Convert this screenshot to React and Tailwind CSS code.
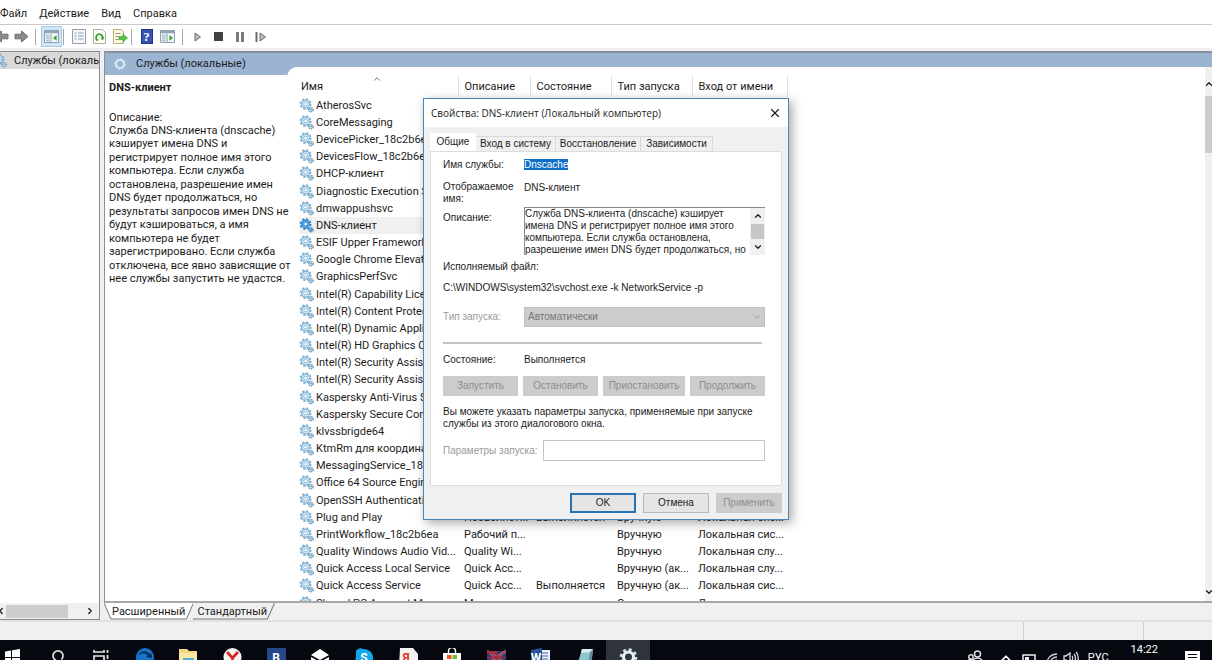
import { useState } from "react";
import { ChevronDown, ChevronLeft, ChevronRight, ChevronUp, X } from "lucide-react";

const MENU = ["Файл", "Действие", "Вид", "Справка"];

const SUMMARY = [
  "Служба DNS-клиента (dnscache)",
  "кэширует имена DNS и",
  "регистрирует полное имя этого",
  "компьютера. Если служба",
  "остановлена, разрешение имен",
  "DNS будет продолжаться, но",
  "результаты запросов имен DNS не",
  "будут кэшироваться, а имя",
  "компьютера не будет",
  "зарегистрировано. Если служба",
  "отключена, все явно зависящие от",
  "нее службы запустить не удастся.",
];

const SERVICES = [
  ["AtherosSvc"],
  ["CoreMessaging"],
  ["DevicePicker_18c2b6ea"],
  ["DevicesFlow_18c2b6ea"],
  ["DHCP-клиент"],
  ["Diagnostic Execution S"],
  ["dmwappushsvc"],
  ["DNS-клиент"],
  ["ESIF Upper Framework"],
  ["Google Chrome Elevat"],
  ["GraphicsPerfSvc"],
  ["Intel(R) Capability Lice"],
  ["Intel(R) Content Protec"],
  ["Intel(R) Dynamic Appli"],
  ["Intel(R) HD Graphics C"],
  ["Intel(R) Security Assist"],
  ["Intel(R) Security Assist"],
  ["Kaspersky Anti-Virus S"],
  ["Kaspersky Secure Conn"],
  ["klvssbrigde64"],
  ["KtmRm для координа"],
  ["MessagingService_18c2"],
  ["Office 64 Source Engin"],
  ["OpenSSH Authenticati"],
  ["Plug and Play", "Позволяет...", "Выполняется", "Вручную", "Локальная сис..."],
  ["PrintWorkflow_18c2b6ea", "Рабочий п...", "", "Вручную", "Локальная сис..."],
  ["Quality Windows Audio Vid...", "Quality Wi...", "", "Вручную", "Локальная слу..."],
  ["Quick Access Local Service", "Quick Acc...", "", "Вручную (ак...", "Локальная слу..."],
  ["Quick Access Service", "Quick Acc...", "Выполняется", "Вручную (ак...", "Локальная сис..."],
  ["Shared PC Account Mana...", "Manages ...", "", "Отключена", "Локальная сис..."],
];

function Gear({ active }) {
  const main = active ? "#2f86cf" : "#7fb2d3";
  const fill = active ? "#5aa9e6" : "#d3e8f5";
  return (
    <svg viewBox="0 0 16 16" className="h-[15px] w-[15px] shrink-0">
      <circle cx="7" cy="6.5" r="5.4" fill="none" stroke={main} strokeWidth="1.9" strokeDasharray="2.2 2.04" />
      <circle cx="7" cy="6.5" r="4.3" fill={fill} stroke={main} strokeWidth="1.2" />
      <circle cx="7" cy="6.5" r="1.9" fill="#fff" stroke={main} strokeWidth="0.9" />
      <circle cx="12.8" cy="12.6" r="2.3" fill={fill} stroke="#5d8cad" strokeWidth="1.3" strokeDasharray="1.3 0.7" />
      <circle cx="12.8" cy="12.6" r="0.8" fill="#5d8cad" />
    </svg>
  );
}

function Arrow({ flip }) {
  return (
    <svg viewBox="0 0 16 14" className={flip ? "h-[13px] w-[15px] -scale-x-100" : "h-[13px] w-[15px]"}>
      <path d="M1 4.5h7V1l7 6-7 6V9.5H1z" fill="#8a8a8a" stroke="#6c6c6c" />
    </svg>
  );
}

function PaneIcon({ play }) {
  return (
    <svg viewBox="0 0 16 14" className="h-[13px] w-[15px]">
      <path d="M.5.5h15v13H.5z" fill="#f6f8fa" stroke="#8296a8" />
      <path d="M1 1h14v2.5H1z" fill="#8fa6ba" />
      <path d="M2 5.5h4M2 7.5h4M2 9.5h4M2 11.5h4" stroke="#8fa6ba" />
      <path d="M7.5 4v9" stroke="#8296a8" />
      {play ? <path d="M10 5.5l4 3-4 3z" fill="#3aa33a" /> : <path d="M13.5 5.5l-4 3 4 3z" fill="#3aa33a" />}
    </svg>
  );
}

function ListIcon() {
  return (
    <svg viewBox="0 0 14 15" className="h-[15px] w-[14px]">
      <path d="M.5.5h13v14H.5z" fill="#f2f6fa" stroke="#8f9fae" />
      <path d="M2.5 4h2M6 4h5.5M2.5 7h2M6 7h5.5M2.5 10h2M6 10h5.5" stroke="#8ba3bb" />
    </svg>
  );
}

function RefreshIcon() {
  return (
    <svg viewBox="0 0 13 15" className="h-[15px] w-[13px]">
      <path d="M.5.5h9l3 3v11H.5z" fill="#fdfdf5" stroke="#a9aea0" />
      <path d="M5 11.5A3.3 3.3 0 1 1 9.6 9" fill="none" stroke="#35a335" strokeWidth="1.7" />
      <path d="M7.5 8.5h4l-2 3z" fill="#35a335" />
    </svg>
  );
}

function ExportIcon() {
  return (
    <svg viewBox="0 0 15 15" className="h-[15px] w-[15px]">
      <path d="M.5.5h8l2 2v12H.5z" fill="#fdf9df" stroke="#b5ae82" />
      <path d="M2.5 4.5h5M2.5 7.5h3M2.5 10.5h3" stroke="#9b9a86" />
      <path d="M6 7.5h4V5l4.5 4-4.5 4v-2.5H6z" fill="#55c444" stroke="#2f9a2c" strokeWidth=".6" />
    </svg>
  );
}

function Separator() {
  return <span className="h-4 w-px bg-[#a5a5a5]" />;
}

function ToolButton({ label, active, children }) {
  return (
    <button
      aria-label={label}
      className={
        active
          ? "flex h-[21px] w-[21px] items-center justify-center border border-[#a5cdea] bg-[#cfe6f7]"
          : "flex h-[21px] w-[21px] items-center justify-center"
      }
    >
      {children}
    </button>
  );
}

function Toolbar() {
  return (
    <div className="flex h-6 shrink-0 items-center border-t border-[#c9c9c9] bg-white">
      <div className="-ml-2 flex w-[43px] items-center justify-between pr-1">
        <ToolButton label="Назад"><Arrow flip /></ToolButton>
        <ToolButton label="Вперед"><Arrow /></ToolButton>
      </div>
      <Separator />
      <div className="flex pr-px pl-[5px]">
        <ToolButton label="Дерево консоли" active><PaneIcon /></ToolButton>
      </div>
      <Separator />
      <div className="flex pl-1">
        <ToolButton label="Свойства"><ListIcon /></ToolButton>
        <ToolButton label="Обновить"><RefreshIcon /></ToolButton>
        <ToolButton label="Экспорт"><ExportIcon /></ToolButton>
      </div>
      <Separator />
      <div className="flex px-1">
        <ToolButton label="Справка">
          <span className="flex h-[15px] w-3 items-center justify-center border border-[#20357c] bg-[#3553b4] font-['Liberation_Serif',serif] text-[13px] font-bold leading-none text-white">
            ?
          </span>
        </ToolButton>
        <ToolButton label="Панель действий"><PaneIcon play /></ToolButton>
      </div>
      <Separator />
      <div className="flex pl-1">
        <ToolButton label="Запустить">
          <svg viewBox="0 0 8 10" className="h-[10px] w-2">
            <path d="M1 1l5.5 4L1 9z" fill="#bbb" stroke="#6d6d6d" />
          </svg>
        </ToolButton>
        <ToolButton label="Остановить"><span className="h-[9px] w-[9px] bg-[#414141]" /></ToolButton>
        <ToolButton label="Приостановить">
          <span className="h-[10px] w-2 border-x-3 border-[#7b7b7b]" />
        </ToolButton>
        <ToolButton label="Перезапустить">
          <svg viewBox="0 0 12 10" className="h-[10px] w-3">
            <path d="M1.5 0v10" stroke="#6d6d6d" strokeWidth="2" />
            <path d="M5 1l5.5 4L5 9z" fill="#bbb" stroke="#6d6d6d" />
          </svg>
        </ToolButton>
      </div>
    </div>
  );
}

function Tree() {
  return (
    <aside className="flex w-[100px] shrink-0 flex-col border-t border-r border-b border-[#8c8c8c] bg-white">
      <div className="-ml-2 flex h-[17px] items-center gap-1 overflow-hidden bg-[#d9d9d9] whitespace-nowrap">
        <Gear />
        <span className="pl-[3px]">Службы (локальные)</span>
      </div>
      <div className="mt-auto flex h-4 items-center justify-between bg-[#f0f0f0] pr-1">
        <ChevronLeft className="-ml-1 h-[10px] w-[10px]" strokeWidth={3} />
        <span className="mr-auto h-[13px] w-[62px] bg-[#cdcdcd]" />
        <ChevronRight className="h-[10px] w-[10px]" strokeWidth={3} />
      </div>
    </aside>
  );
}

function ServiceTable() {
  return (
    <table className="w-[488px] table-fixed border-collapse text-left">
      <colgroup>
        <col className="w-[159px]" />
        <col className="w-[72px]" />
        <col className="w-[81px]" />
        <col className="w-[81px]" />
        <col className="w-[95px]" />
      </colgroup>
      <thead>
        <tr className="h-[21px]">
          <th className="border-r border-[#e0e0e0] pl-[2px] font-normal">
            <span className="relative block">
              Имя
              <ChevronUp className="absolute -top-[5px] left-[71px] h-[10px] w-[10px] text-[#555]" strokeWidth={2} />
            </span>
          </th>
          {["Описание", "Состояние", "Тип запуска", "Вход от имени"].map((title) => (
            <th key={title} className="border-r border-[#e0e0e0] pl-[6px] font-normal whitespace-nowrap">
              {title}
            </th>
          ))}
        </tr>
      </thead>
      <tbody>
        {SERVICES.map(([name, ...rest], i) => (
          <tr key={i} className="h-[17px] leading-[17px] nth-[6n]:h-[18px]">
            <td className="p-0">
              <div className={name === "DNS-клиент" ? "flex items-center gap-[2px] bg-[#f0f0f0]" : "flex items-center gap-[2px]"}>
                <Gear active={name === "DNS-клиент"} />
                <span className="whitespace-nowrap">{name}</span>
              </div>
            </td>
            {rest.map((cell, j) => (
              <td key={j} className="p-0 pl-[6px] whitespace-nowrap">{cell}</td>
            ))}
          </tr>
        ))}
      </tbody>
    </table>
  );
}

function SheetTabs() {
  return (
    <div className="flex h-[17px] shrink-0 bg-[#f0f0f0]">
      <button className="relative flex items-center pr-2 pl-2">
        <svg viewBox="0 0 90 17" preserveAspectRatio="none" className="absolute inset-0 h-full w-full">
          <path d="M0 0l7 16h76l6-16z" fill="#fff" />
          <path d="M0 0l7 16h76l7-16" fill="none" stroke="#777" />
        </svg>
        <span className="relative">Расширенный</span>
      </button>
      <button className="relative flex items-center pr-2 pl-1">
        <svg viewBox="0 0 80 17" preserveAspectRatio="none" className="absolute inset-0 h-full w-full">
          <path d="M-4 5l4 11h73l7-16" fill="none" stroke="#777" />
        </svg>
        <span className="relative">Стандартный</span>
      </button>
    </div>
  );
}

function Details() {
  return (
    <main className="flex min-w-0 flex-1 flex-col">
      <div className="flex min-h-0 flex-1 flex-col border-t-2 border-b-2 border-l border-[#8a8f98] border-b-[#a8a8a8] bg-[#9ab4d2]">
        <div className="flex min-h-0 flex-1">
          <section className="z-10 flex w-[182px] shrink-0 flex-col bg-white">
            <h1 className="flex h-[22px] shrink-0 items-center gap-[9px] bg-[#9ab4d2] pl-2">
              <svg viewBox="0 0 14 14" className="h-[14px] w-[14px]">
                <circle cx="7" cy="7" r="4" fill="none" stroke="#dceaf6" strokeWidth="2" />
                <circle cx="7" cy="7" r="5.5" fill="none" stroke="#c6dcef" strokeDasharray="2 2.3" />
              </svg>
              Службы (локальные)
            </h1>
            <h2 className="pt-[5px] pl-1 leading-4 font-bold">DNS-клиент</h2>
            <div className="pt-[15px] pl-1 whitespace-nowrap">
              <p className="h-[13px] leading-[13px]">Описание:</p>
              {SUMMARY.map((line) => (
                <p key={line} className="h-[14px] leading-[14px] even:h-[13px]">{line}</p>
              ))}
            </div>
          </section>
          <div className="mt-[14px] flex min-w-0 flex-1 justify-between overflow-hidden rounded-tl-[10px] bg-white">
            <div className="pt-[9px] pl-3">
              <ServiceTable />
            </div>
            <div className="flex w-[7px] shrink-0 flex-col items-center overflow-hidden bg-[#f0f0f0] pt-3">
              <ChevronUp className="h-[10px] w-[10px] shrink-0" strokeWidth={3} />
              <span className="mt-[7px] h-[57px] w-full bg-[#cdcdcd]" />
              <ChevronDown className="mt-auto mb-1 h-[10px] w-[10px] shrink-0" strokeWidth={3} />
            </div>
          </div>
        </div>
      </div>
      <SheetTabs />
    </main>
  );
}

const grayButton = "h-[20px] bg-[#cccccc] text-[#8c8c8c]";

function PropertiesDialog({ onClose }) {
  return (
    <div
      role="dialog"
      aria-label="Свойства: DNS-клиент"
      className="absolute top-[98px] left-[423px] z-20 w-[366px] border border-[#4a86b8] bg-[#f0f0f0] font-['Liberation_Sans',sans-serif] text-[10px] leading-3 shadow-[3px_3px_10px_rgba(0,0,0,0.35)]"
    >
      <div className="flex h-7 items-center justify-between bg-white pr-[6px] pl-[7px] font-['Open_Sans','Noto_Sans',sans-serif]">
        <span>Свойства: DNS-клиент (Локальный компьютер)</span>
        <button aria-label="Закрыть" onClick={onClose}>
          <X className="h-[14px] w-[14px]" strokeWidth={2} />
        </button>
      </div>

      <div className="px-[6px] pt-[6px]">
        <div className="flex items-end">
          <button className="h-[18px] w-[46px] bg-white">Общие</button>
          <button className="h-[15px] w-20 border-t border-r border-[#d9d9d9]">Вход в систему</button>
          <button className="h-[15px] w-[85px] border-t border-r border-[#d9d9d9]">Восстановление</button>
          <button className="h-[15px] w-[72px] border-t border-r border-[#d9d9d9]">Зависимости</button>
        </div>

        <div className="border border-[#dcdcdc] bg-white pt-[7px] pr-4 pb-6 pl-3">
          <div className="grid grid-cols-[80px_1fr] gap-x-px">
            <span>Имя службы:</span>
            <span>
              <span className="bg-[#0f6fc6] text-white">Dnscache</span>
            </span>
            <span className="mt-[10px]">Отображаемое имя:</span>
            <span className="mt-[11px]">DNS-клиент</span>
            <label htmlFor="about" className="mt-[7px]">Описание:</label>
            <div className="mt-[2px] flex h-[48px] border-t border-l border-[#8a8a8a]">
              <textarea
                id="about"
                readOnly
                className="min-w-0 flex-1 resize-none overflow-hidden bg-white whitespace-pre outline-none"
                value={
                  "Служба DNS-клиента (dnscache) кэширует\nимена DNS и регистрирует полное имя этого\nкомпьютера. Если служба остановлена,\nразрешение имен DNS будет продолжаться, но"
                }
              />
              <div className="flex w-[15px] flex-col items-center justify-between bg-[#f0f0f0] py-[3px]">
                <ChevronUp className="h-[10px] w-[10px]" strokeWidth={3} />
                <span className="mr-px h-[15px] w-[13px] bg-[#c6c6c6]" />
                <ChevronDown className="h-[10px] w-[10px]" strokeWidth={3} />
              </div>
            </div>
          </div>

          <p className="mt-[6px]">Исполняемый файл:</p>
          <p className="mt-[9px]">C:\WINDOWS\system32\svchost.exe -k NetworkService -p</p>

          <div className="mt-[13px] grid grid-cols-[80px_1fr] items-center gap-x-px">
            <label htmlFor="startup" className="text-[#9a9a9a]">Тип запуска:</label>
            <div className="relative">
              <select
                id="startup"
                disabled
                className="block h-5 w-full appearance-none border border-[#bfbfbf] bg-[#cccccc] px-[3px] text-[#777] opacity-100"
              >
                <option>Автоматически</option>
              </select>
              <ChevronDown className="absolute top-[5px] right-[3px] h-[10px] w-[10px] text-[#999]" />
            </div>
          </div>

          <hr className="mt-[15px] mr-[3px] border-t-2 border-[#c4c4c4]" />

          <div className="mt-[10px] grid grid-cols-[80px_1fr] gap-x-px">
            <span>Состояние:</span>
            <span>Выполняется</span>
          </div>

          <div className="mt-[10px] flex justify-between">
            <button disabled className={`${grayButton} w-[75px]`}>Запустить</button>
            <button disabled className={`${grayButton} w-[75px]`}>Остановить</button>
            <button disabled className={`${grayButton} w-[82px]`}>Приостановить</button>
            <button disabled className={`${grayButton} w-[75px]`}>Продолжить</button>
          </div>

          <p className="mt-[10px] whitespace-nowrap">
            Вы можете указать параметры запуска, применяемые при запуске
            <br />
            службы из этого диалогового окна.
          </p>

          <div className="mt-[10px] flex items-center">
            <label htmlFor="params" className="w-[100px] text-[#9a9a9a] whitespace-nowrap">Параметры запуска:</label>
            <input id="params" disabled className="h-[21px] min-w-0 flex-1 border border-[#c4c4c4] bg-white px-1" />
          </div>
        </div>
      </div>

      <div className="flex justify-end gap-[7px] pt-[7px] pr-[6px] pb-[6px]">
        <button onClick={onClose} className="h-5 w-[66px] border-2 border-[#2a73b3] bg-[#e5e5e5]">OK</button>
        <button onClick={onClose} className="h-5 w-[66px] border border-[#b9b9b9] bg-[#e5e5e5]">Отмена</button>
        <button disabled className={`${grayButton} w-[66px]`}>Применить</button>
      </div>
    </div>
  );
}

const TASKS = [
  [
    "Пуск",
    <path d="M2 3.5l6-1v6.5H2zM9 2.3l8-1.3v8H9zM2 10h6v6.5l-6-1zM9 10h8v8l-8-1.3z" fill="#fff" />,
  ],
  ["Поиск", <path d="M7.6 11.5a5 5 0 1 1 6.8 0M8.5 11L6 16" fill="none" stroke="#ddd" strokeWidth="1.7" />],
  [
    "Представление задач",
    <path d="M3 2v2h10V2M3 16V8h10v8M16.5 2v3M16.5 7v4M16.5 13v3" fill="none" stroke="#e8e8e8" strokeWidth="1.7" />,
  ],
  [
    "Edge",
    <>
      <circle cx="10" cy="9" r="9" fill="#1673c9" />
      <path d="M3 8c3-6 9-6 12-1l1-3 1 6-6-1 2-1c-3-4-7-3-10 0z" fill="#06284f" />
    </>,
  ],
  [
    "Проводник",
    <>
      <path d="M0 1h8l2 2h8v15H0z" fill="#f4d67c" />
      <path d="M0 5h18v13H0z" fill="#fbe9a5" />
      <path d="M4 10h11v8H4z" fill="#57aeca" />
    </>,
  ],
  [
    "Yandex",
    <>
      <circle cx="9.5" cy="9" r="9" fill="#f4f4f4" />
      <path d="M4 4l5.5 6L15 4M9.5 9v8" fill="none" stroke="#d9241f" strokeWidth="2.6" />
    </>,
  ],
  ["ВКонтакте", <rect width="19" height="19" rx="1" fill="#24488a" />, "B", "text-white"],
  [
    "Почта",
    <>
      <path d="M0 7l9-6 9 6-9 5z" fill="#fff" />
      <path d="M0 9l9 5 9-5v9H0z" fill="#fff" />
    </>,
  ],
  ["Skype", <path d="M1 3a5 5 0 0 1 7-2 9 9 0 0 1 10 10v7H3a9 9 0 0 1-2-9z" fill="#13a6e8" />, "S", "text-white"],
  ["Яндекс", <path d="M1 0h13l5 6v12H0z" fill="#f1f1ef" />, "Я", "pr-1 text-[#dc3a2b]"],
  [
    "Магазин",
    <>
      <path d="M5.5 5V3a3.5 3.5 0 0 1 7 0v2" fill="none" stroke="#fff" strokeWidth="1.4" />
      <path d="M0 5h18v13H0z" fill="#fff" />
      <path d="M4 7h4.5v4H4z" fill="#f05125" />
      <path d="M9.5 7H14v4H9.5z" fill="#7ebb28" />
      <path d="M4 12h4.5v4H4z" fill="#28a3e4" />
      <path d="M9.5 12H14v4H9.5z" fill="#fab922" />
    </>,
  ],
  [
    "Игра",
    <>
      <path d="M0 3h19v13H0z" fill="#30386c" />
      <path d="M0 3l19 13M19 3L0 16" stroke="#b9a9b8" strokeWidth="2.5" />
      <path d="M0 3h9v3H0z" fill="#a62f3b" />
      <path d="M0 9.5h19M9.5 3v13M0 3l19 13M19 3L0 16" stroke="#a8283f" strokeWidth="1.5" />
    </>,
  ],
  [
    "Word",
    <>
      <path d="M8 2h11v15H8z" fill="#eef3fb" />
      <path d="M11 5h6M11 8h6M11 11h6" stroke="#3a62a8" />
      <path d="M0 2l11-2v18H0z" fill="#2b569a" />
    </>,
    "W",
    "pr-2",
  ],
  [
    "Блокнот",
    <>
      <path d="M7 1h11l-2 17H2z" fill="#8fc3cf" />
      <path d="M7 1l11 0-1 3L6 5z" fill="#d9eef0" />
      <path d="M15 4l3-3-2 17h-3z" fill="#5b8d98" />
    </>,
  ],
  [
    "Службы",
    <>
      <circle cx="9.5" cy="9" r="7.5" fill="none" stroke="#cfe1ea" strokeWidth="2.6" strokeDasharray="3 2.89" />
      <circle cx="9.5" cy="9" r="5" fill="none" stroke="#e8f2f7" strokeWidth="3" />
    </>,
  ],
];

function Taskbar() {
  return (
    <footer className="flex h-5 shrink-0 items-start justify-between overflow-hidden bg-[#05090f] text-white">
      <nav className="-ml-[10px] flex">
        {TASKS.map(([label, art, letter, tone]) => (
          <button
            key={label}
            aria-label={label}
            className={label === "Службы" ? "flex h-8 w-11 justify-center bg-[#30353c] pt-2" : "flex h-8 w-11 justify-center pt-2"}
          >
            <span className="relative flex h-[19px] w-[19px] items-center justify-center">
              <svg viewBox="0 0 19 19" className="absolute inset-0">{art}</svg>
              {letter && <b className={`relative text-xs leading-4 ${tone}`}>{letter}</b>}
            </span>
          </button>
        ))}
      </nav>
      <div className="flex items-start pr-3">
        <svg viewBox="0 0 16 16" className="mt-[10px] mr-4 h-4 w-4 fill-none stroke-[#ddd]" strokeWidth="1.5">
          <circle cx="10.5" cy="4" r="3" />
          <circle cx="4" cy="7" r="2.2" />
          <path d="M5 14c0-8 11-8 11 0M0 14c0-4 3-5 5-4" />
        </svg>
        <ChevronUp className="mt-[11px] mr-[9px] h-[14px] w-[14px]" strokeWidth={3} />
        <svg viewBox="0 0 14 14" className="mt-[14px] mr-[10px] h-[14px] w-[14px]">
          <path d="M1 1h12v9H1z" fill="none" stroke="#eee" strokeWidth="1.5" />
          <path d="M3 3h4v6H3z" fill="#eee" />
        </svg>
        <svg viewBox="0 0 12 14" className="mt-[13px] mr-[5px] h-[14px] w-3 fill-none stroke-[#ccc]" strokeWidth="1.3">
          <path d="M1 11C1 5 5 1 11 1M4 11c0-4 3-7 7-7M7 11c0-2 2-4 4-4" />
        </svg>
        <svg viewBox="0 0 16 14" className="mt-[11px] mr-[9px] h-[14px] w-4 fill-none stroke-[#ddd]" strokeWidth="1.3">
          <path d="M1 5h2l4-3v10L3 9H1zM9 5c1 1 1 3 0 4M11 3c2 2 2 6 0 8M13 1c3 3 3 9 0 12" />
        </svg>
        <span className="mt-[11px] mr-[22px] leading-[14px]">РУС</span>
        <time className="mt-[3px] mr-[27px] leading-[14px]">14:22</time>
        <svg viewBox="0 0 15 16" className="mt-[11px] h-4 w-[15px]">
          <path d="M0 0h15v12H9l-3 3v-3H0z" fill="#fff" />
          <path d="M3 3.5h9M3 6.5h9M3 9.5h6" stroke="#05090f" />
        </svg>
      </div>
    </footer>
  );
}

export default function App() {
  const [open, setOpen] = useState(true);

  return (
    <div className="relative flex h-screen flex-col overflow-hidden bg-[#f0f0f0] font-['Roboto','Noto_Sans',sans-serif] text-[11px] leading-4 text-[#1c1c1c]">
      <nav className="flex h-6 shrink-0 items-center gap-3 bg-white pt-1">
        {MENU.map((item) => (
          <button key={item}>{item}</button>
        ))}
      </nav>
      <Toolbar />
      <div className="flex min-h-0 flex-1 gap-1 pt-[3px]">
        <Tree />
        <Details />
      </div>
      <div className="flex h-5 shrink-0 justify-end border-t-2 border-[#e2e2e2]">
        <span className="w-[120px] border-l border-[#d2d2d2]" />
        <span className="w-[69px] border-l border-[#d2d2d2]" />
      </div>
      <Taskbar />
      {open && <PropertiesDialog onClose={() => setOpen(false)} />}
    </div>
  );
}
